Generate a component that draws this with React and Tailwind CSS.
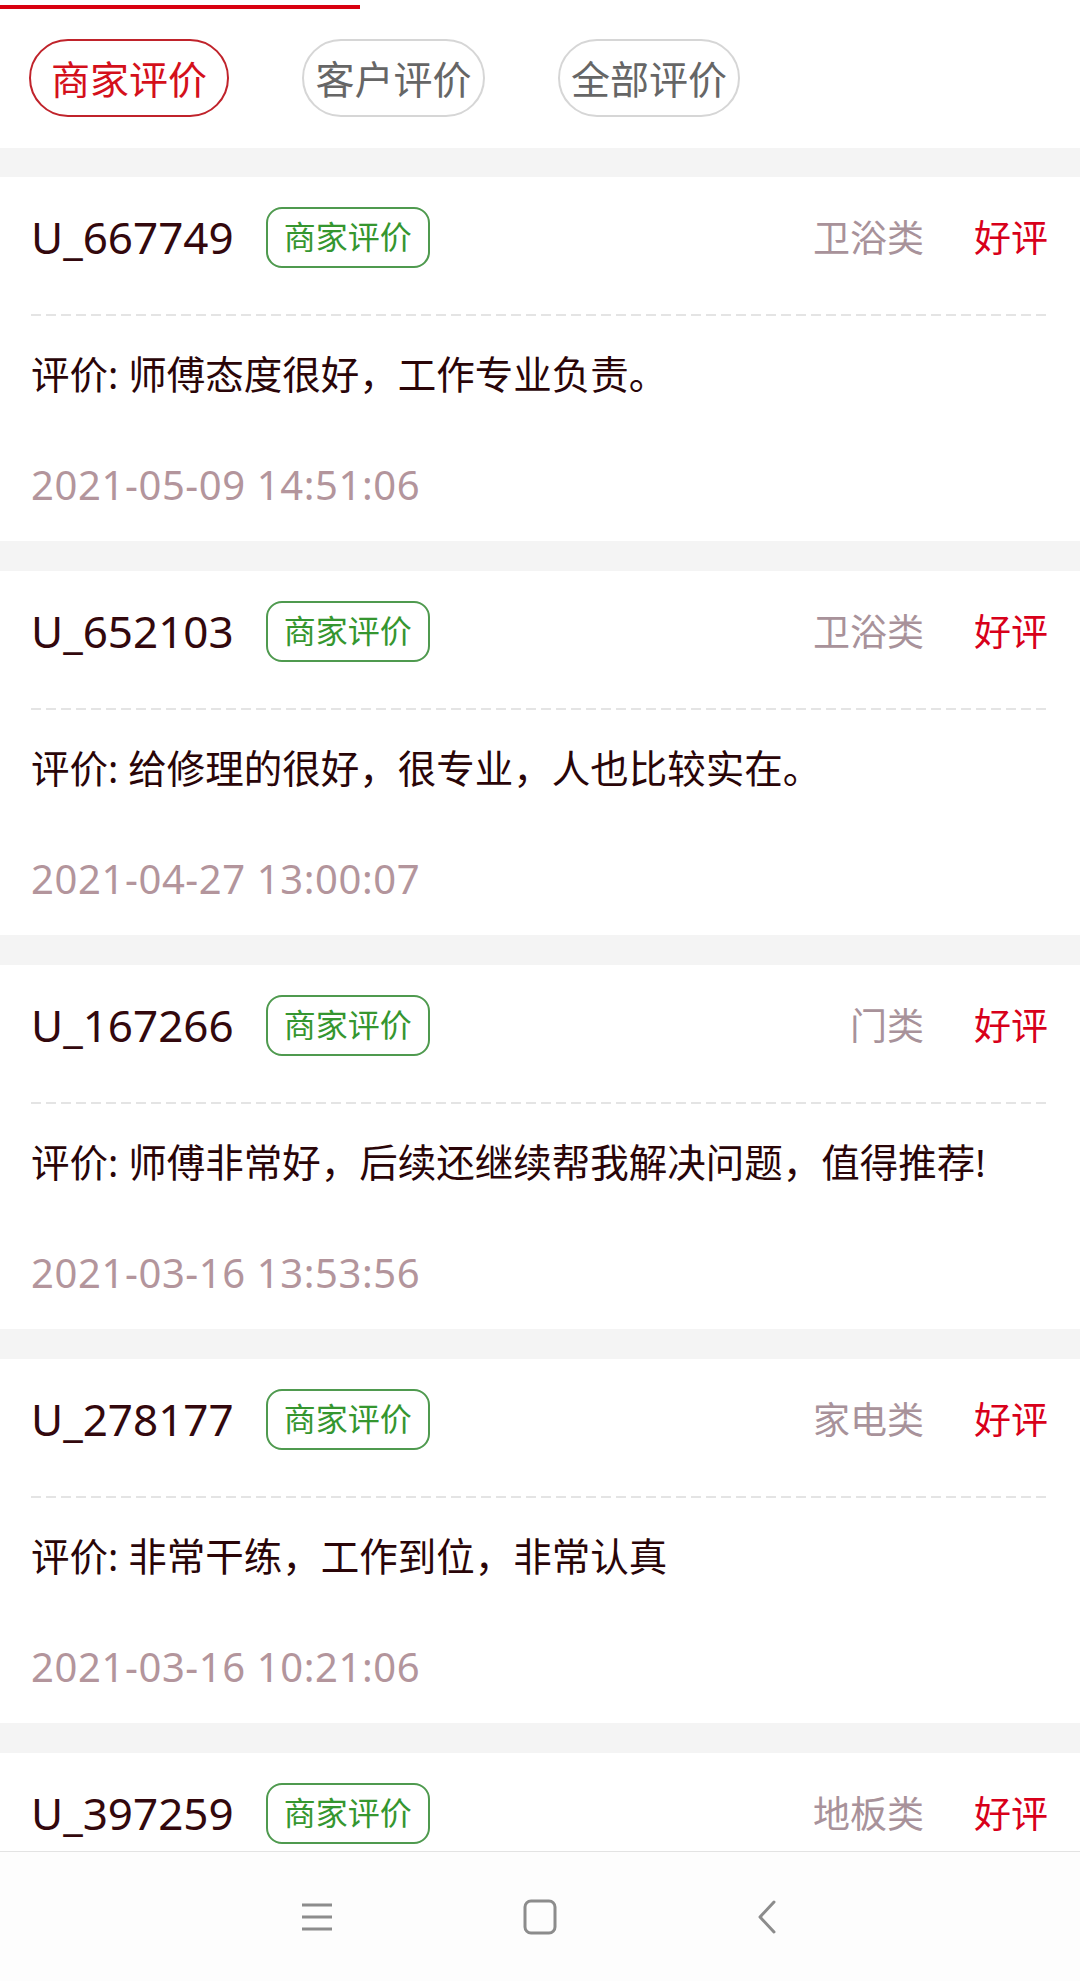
import { useState } from 'react'

const reviews = [
  { user: 'U_667749', cat: '卫浴类', text: '评价: 师傅态度很好，工作专业负责。', time: '2021-05-09 14:51:06' },
  { user: 'U_652103', cat: '卫浴类', text: '评价: 给修理的很好，很专业，人也比较实在。', time: '2021-04-27 13:00:07' },
  { user: 'U_167266', cat: '门类', text: '评价: 师傅非常好，后续还继续帮我解决问题，值得推荐!', time: '2021-03-16 13:53:56' },
  { user: 'U_278177', cat: '家电类', text: '评价: 非常干练，工作到位，非常认真', time: '2021-03-16 10:21:06' },
  // only the header of this one is on screen, the rest is under the nav bar
  { user: 'U_397259', cat: '地板类', text: '', time: '' },
]

const tabs = [
  { key: 'shop', label: '商家评价', w: 'w-[200px]' },
  { key: 'customer', label: '客户评价', w: 'w-[183px]' },
  { key: 'all', label: '全部评价', w: 'w-[182px]' },
]

function ReviewCard({ r }) {
  return (
    <div className="h-[364px] shrink-0 bg-white pl-[31px] pr-[32px]">
      <div className="flex h-[120px] items-center">
        <span className="text-[44px] leading-none text-[#33080d]">{r.user}</span>
        <span className="ml-[32px] flex h-[61px] items-center rounded-[16px] border-2 border-[#4f9a4f] px-[16px] text-[32px] leading-none text-[#35962f]">
          商家评价
        </span>
        <span className="ml-auto text-[37px] leading-none text-[#a8929a]">{r.cat}</span>
        <span className="ml-[50px] text-[37px] leading-none text-[#d8001a]">好评</span>
      </div>
      <div className="mt-[17px] h-[2px] bg-[repeating-linear-gradient(90deg,#e4e4e4_0_10px,transparent_10px_15px)]" />
      {r.text && <p className="mt-[34px] text-[38.5px] leading-[48px] text-[#2a0508]">{r.text}</p>}
      {r.time && <p className="mt-[63px] text-[40px] leading-[48px] tracking-[0.6px] text-[#b3959c]">{r.time}</p>}
    </div>
  )
}

export default function App() {
  const [active, setActive] = useState('shop')

  return (
    <div className="flex h-[1981px] w-[1080px] flex-col overflow-hidden bg-white font-['Noto_Sans','Noto_Sans_CJK_SC',sans-serif]">
      <div className="h-[148px] shrink-0 bg-white">
        <div className="mt-[5px] h-[4px] w-[360px] bg-[#d9000f]" />
        <div className="mt-[30px] flex gap-[73px] pl-[29px]">
          {tabs.map(t => (
            <button
              key={t.key}
              onClick={() => setActive(t.key)}
              className={
                active === t.key
                  ? `${t.w} h-[78px] rounded-full border-2 border-[#c0232b] text-[39px] leading-none text-[#d4101b]`
                  : `${t.w} h-[78px] rounded-full border-2 border-[#d6d6d6] text-[39px] leading-none text-[#666666]`
              }
            >
              {t.label}
            </button>
          ))}
        </div>
      </div>

      <div className="flex flex-1 flex-col gap-[30px] overflow-hidden bg-[#f4f4f4] pt-[29px]">
        {reviews.map(r => <ReviewCard key={r.user} r={r} />)}
      </div>

      <div className="flex h-[130px] shrink-0 items-center border-t border-[#e3e3e3] bg-[#fdfdfd] pl-[301px]">
        <svg width="32" height="30" viewBox="0 0 32 30" className="text-[#8c8c8c]">
          <path d="M1 3h30M1 15h30M1 27h30" stroke="currentColor" strokeWidth="3" />
        </svg>
        <svg width="34" height="36" viewBox="0 0 34 36" className="ml-[190px] text-[#8c8c8c]">
          <rect x="2" y="2" width="30" height="32" rx="6" fill="none" stroke="currentColor" strokeWidth="3" />
        </svg>
        <svg width="22" height="34" viewBox="0 0 22 34" className="ml-[198px] text-[#8c8c8c]">
          <path d="M19 2L5 17l14 15" fill="none" stroke="currentColor" strokeWidth="3" strokeLinecap="round" strokeLinejoin="round" />
        </svg>
      </div>
    </div>
  )
}
